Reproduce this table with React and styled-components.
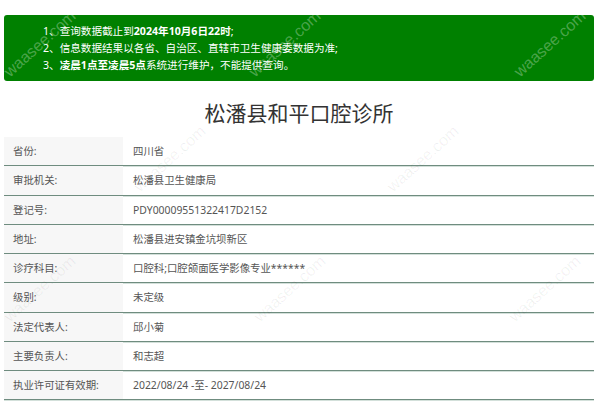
import React from "react";
import styled, { createGlobalStyle } from "styled-components";

const GlobalStyle = createGlobalStyle`
  html, body {
    margin: 0;
    padding: 0;
    background: #fff;
  }
  body {
    font-family: "Noto Sans", "Noto Sans CJK SC", sans-serif;
    color: #555;
  }
`;

const rows = [
  ["省份:", "四川省"],
  ["审批机关:", "松潘县卫生健康局"],
  ["登记号:", "PDY00009551322417D2152"],
  ["地址:", "松潘县进安镇金坑坝新区"],
  ["诊疗科目:", "口腔科;口腔颌面医学影像专业******"],
  ["级别:", "未定级"],
  ["法定代表人:", "邱小菊"],
  ["主要负责人:", "和志超"],
  ["执业许可证有效期:", "2022/08/24 -至- 2027/08/24"],
];

const marks = [
  { x: 40, y: 45, dark: false },
  { x: 285, y: 45, dark: false },
  { x: 550, y: 45, dark: false },
  { x: 170, y: 160, dark: true },
  { x: 423, y: 160, dark: true },
  { x: 40, y: 290, dark: true },
  { x: 290, y: 290, dark: true },
  { x: 545, y: 290, dark: true },
];

const App = () => {
  return (
    <Page>
      <GlobalStyle />
      <Notice>
        <NoticeLine>
          1、查询数据截止到<b>2024年10月6日22时</b>;
        </NoticeLine>
        <NoticeLine>2、信息数据结果以各省、自治区、直辖市卫生健康委数据为准;</NoticeLine>
        <NoticeLine>
          3、<b>凌晨1点至凌晨5点</b>系统进行维护，不能提供查询。
        </NoticeLine>
      </Notice>
      <Title>松潘县和平口腔诊所</Title>
      <Table>
        {rows.map(([label, value]) => (
          <Row key={label}>
            <Label>{label}</Label>
            <Value>{value}</Value>
          </Row>
        ))}
      </Table>
      {marks.map((m, i) => (
        <Watermark key={i} $dark={m.dark} style={{ left: m.x - 50, top: m.y - 10 }}>
          waasee.com
        </Watermark>
      ))}
    </Page>
  );
};

export default App;

const Page = styled.div`
  position: relative;
  width: 600px;
  height: 414px;
  overflow: hidden;
  padding: 15px 6px 0 4px;
  box-sizing: border-box;
`;

const Notice = styled.div`
  background: #008000;
  border-radius: 3px;
  color: #fff;
  padding: 8px 10px 6px 39px;
  height: 66px;
  box-sizing: border-box;
  font-size: 10.6px;
`;

const NoticeLine = styled.div`
  line-height: 17px;
  white-space: nowrap;

  b {
    font-weight: 700;
  }
`;

const Title = styled.h1`
  margin: 17px 0 9px;
  text-align: center;
  font-size: 21px;
  line-height: 30px;
  font-weight: 400;
  color: #333;
`;

const Table = styled.div`
  display: flex;
  flex-direction: column;
`;

const Row = styled.div`
  display: flex;
  height: 29.25px;
  border-bottom: 1px solid #6f8c7f;
  box-shadow: 0 1px 0 #d3e0da;
  box-sizing: border-box;
  font-size: 10.4px;
  line-height: 14px;
`;

const Label = styled.div`
  width: 119px;
  flex: none;
  background: #f7f7f7;
  padding-left: 9px;
  display: flex;
  align-items: center;
  box-sizing: border-box;
  color: #555;
`;

const Value = styled.div`
  flex: 1;
  padding-left: 10px;
  display: flex;
  align-items: center;
  color: #555;
`;

const Watermark = styled.div`
  position: absolute;
  width: 100px;
  text-align: center;
  font-family: "Liberation Sans", sans-serif;
  font-size: 16px;
  transform: rotate(-42deg);
  pointer-events: none;
  color: ${(p) => (p.$dark ? "rgba(0, 0, 0, 0.06)" : "rgba(255, 255, 255, 0.3)")};
`;
